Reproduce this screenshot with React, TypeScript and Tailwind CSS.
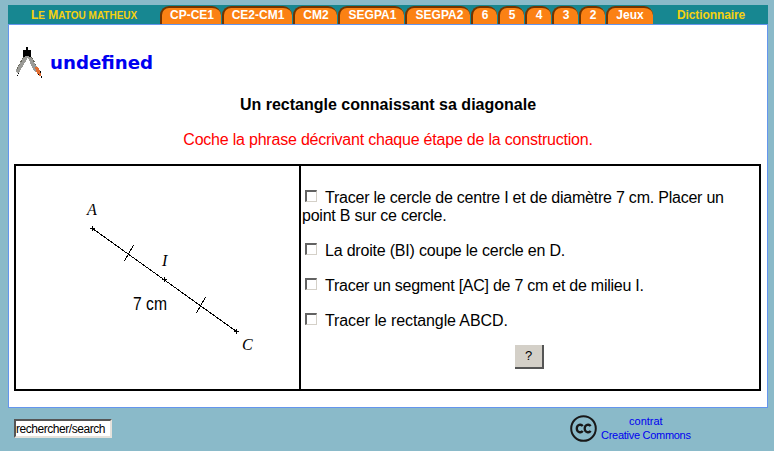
const tabs = [
  { label: "CP-CE1", width: "w-[61px]", indent: "pl-[1px]" },
  { label: "CE2-CM1", width: "w-[70px]", indent: "pl-0" },
  { label: "CM2", width: "w-[44px]", indent: "pl-0" },
  { label: "SEGPA1", width: "w-[66px]", indent: "pl-[1px]" },
  { label: "SEGPA2", width: "w-[65px]", indent: "pl-[2px]" },
  { label: "6", width: "w-[26px]", indent: "pl-0" },
  { label: "5", width: "w-[26px]", indent: "pl-0" },
  { label: "4", width: "w-[26px]", indent: "pl-0" },
  { label: "3", width: "w-[26px]", indent: "pl-0" },
  { label: "2", width: "w-[26px]", indent: "pl-0" },
  { label: "Jeux", width: "w-[47px]", indent: "pr-[1px]" },
];

const steps = [
  { text: "Tracer le cercle de centre I et de diamètre 7 cm. Placer un point B sur ce cercle.", tracking: "tracking-[-0.225px]" },
  { text: "La droite (BI) coupe le cercle en D.", tracking: "tracking-[-0.2px]" },
  { text: "Tracer un segment [AC] de 7 cm et de milieu I.", tracking: "tracking-[-0.25px]" },
  { text: "Tracer le rectangle ABCD.", tracking: "tracking-[-0.1px]" },
];

function Header() {
  return (
    <header className="flex h-[19px] bg-[#178791] text-[12px] leading-[19px] text-[#f5d10f]">
      <div className="w-[152px] pl-[23px] pt-px font-bold whitespace-nowrap">
        L<span className="text-[10px]">E</span> M<span className="text-[10px]">ATOU MATHEUX</span>
      </div>
      <nav className="flex gap-px pt-px">
        {tabs.map((tab) => (
          <a
            key={tab.label}
            className={`${tab.width} ${tab.indent} h-[18px] rounded-t-[9px] border-t-2 border-l-2 border-[#713400] bg-[#fb8114] text-center font-bold leading-[15px] text-white`}
          >
            {tab.label}
          </a>
        ))}
      </nav>
      <div className="ml-[24px] pt-px font-bold tracking-[-0.1px]">Dictionnaire</div>
    </header>
  );
}

function Compass() {
  return (
    <svg width="28" height="32" viewBox="0 0 28 32" shapeRendering="crispEdges">
      <path d="M8 9h5L4 24 2 26 0 25 0 23zM11 9h4l7 13v4l-4-2z" fill="#9a9a96" />
      <path d="M7.5 10L0.5 23M15.5 10L20 18" stroke="#66665a" strokeWidth="1" strokeDasharray="2 2" />
      <path d="M10 0h2v3h3v7h-2v-1H9v1H7V3h3z" fill="#000" />
      <path d="M19 20h3l3 6v3h-2l-2-3z" fill="#e06c30" />
      <path d="M1 28h1v1H1zM2 26h1v1H2zM22 27h1v1h-1zM24 24h1v2h-1zM25 29h1v2h-1z" fill="#000" />
    </svg>
  );
}

function Figure() {
  return (
    <svg width="283" height="222" viewBox="16 166 283 222">
      <g stroke="#000" strokeWidth="1" shapeRendering="crispEdges" fill="none">
        <path d="M92.5 228.5L236.5 331.5" />
        <path d="M90 228.5h5M92.5 226v5M162 279.5h5M164.5 277v5M234 331.5h5M236.5 329v5" />
        <path d="M133.5 245L124.5 261M205.5 297L196.5 313" />
      </g>
      <g fontFamily="Liberation Serif, serif" fontStyle="italic" fontSize="16">
        <text x="87" y="215">A</text>
        <text x="162" y="266">I</text>
        <text x="242" y="350">C</text>
      </g>
      <text x="133" y="310" fontFamily="Liberation Sans, sans-serif" fontSize="18" textLength="34" lengthAdjust="spacingAndGlyphs">7 cm</text>
    </svg>
  );
}

export default function App() {
  return (
    <div className="h-[451px] w-[774px] overflow-hidden bg-[#8abac9] pl-2 pt-[5px] font-['Liberation_Sans',Arial,sans-serif] text-black">
      <div className="w-[760px]">
        <Header />
        <main className="h-[384px] border border-[#6495ed] bg-white px-[5px] pt-[22px]">
          <div className="flex h-[33px] items-start">
            <div className="ml-[2px]"><Compass /></div>
            <h1 className="ml-[6px] mt-[5px] font-['DejaVu_Sans',Verdana,sans-serif] text-[18.2px] font-bold leading-[22px] text-[#0000f0]">undefined</h1>
          </div>
          <h2 className="mt-[16px] text-center text-[16px] font-bold leading-[18px]">Un rectangle connaissant sa diagonale</h2>
          <p className="mt-[17px] text-center text-[16px] leading-[18px] tracking-[-0.21px] text-[#f00]">Coche la phrase décrivant chaque étape de la construction.</p>
          <section className="mt-[15px] flex h-[227px] w-[747px] border-2 border-black">
            <div className="w-[285px] border-r-2 border-black"><Figure /></div>
            <div className="flex-1 pl-px pt-[23px] text-[16px] leading-[18px]">
              {steps.map((step, i) => (
                <label key={step.text} className={`${i === 3 ? "mb-[15px]" : "mb-[17px]"} ${step.tracking} block w-[430px]`}>
                  <input
                    type="checkbox"
                    className="mr-[8px] mb-px ml-[3px] h-[12px] w-[12px] appearance-none border border-t-2 border-l-2 border-t-[#626262] border-r-[#d4d0c8] border-b-[#d4d0c8] border-l-[#626262] bg-white"
                  />
                  {step.text}
                </label>
              ))}
              <button className="ml-[213px] block h-[24px] w-[29px] border-r-2 border-b-2 border-[#555] bg-[#d4d0c8] text-[13px] leading-[22px]">?</button>
            </div>
          </section>
        </main>
        <footer className="flex pt-[7px]">
          <input
            readOnly
            value="rechercher/search"
            className="mt-[4px] ml-[6px] h-[19px] w-[98px] border-2 border-t-[#555] border-r-[#e5e2dc] border-b-[#e5e2dc] border-l-[#555] bg-white text-[12px] leading-[15px] tracking-[-0.45px] outline-none"
          />
          <svg className="ml-[458px]" width="27" height="27" viewBox="0 0 27 27">
            <circle cx="13.5" cy="13.5" r="12.3" fill="none" stroke="#181818" strokeWidth="2" />
            <g fill="none" stroke="#181818" strokeWidth="2.3">
              <path d="M12.7 11.1C11.3 8.8 6.8 9.4 6.8 13.5S11.3 18.2 12.7 15.9" />
              <path d="M20.6 11.1C19.2 8.8 14.7 9.4 14.7 13.5S19.2 18.2 20.6 15.9" />
            </g>
          </svg>
          <a className="mt-[-1px] ml-[4px] text-center text-[11px] leading-[14px] tracking-[-0.28px] text-[#0000f0]"><span className="tracking-normal">contrat</span><br />Creative Commons</a>
        </footer>
      </div>
    </div>
  );
}
